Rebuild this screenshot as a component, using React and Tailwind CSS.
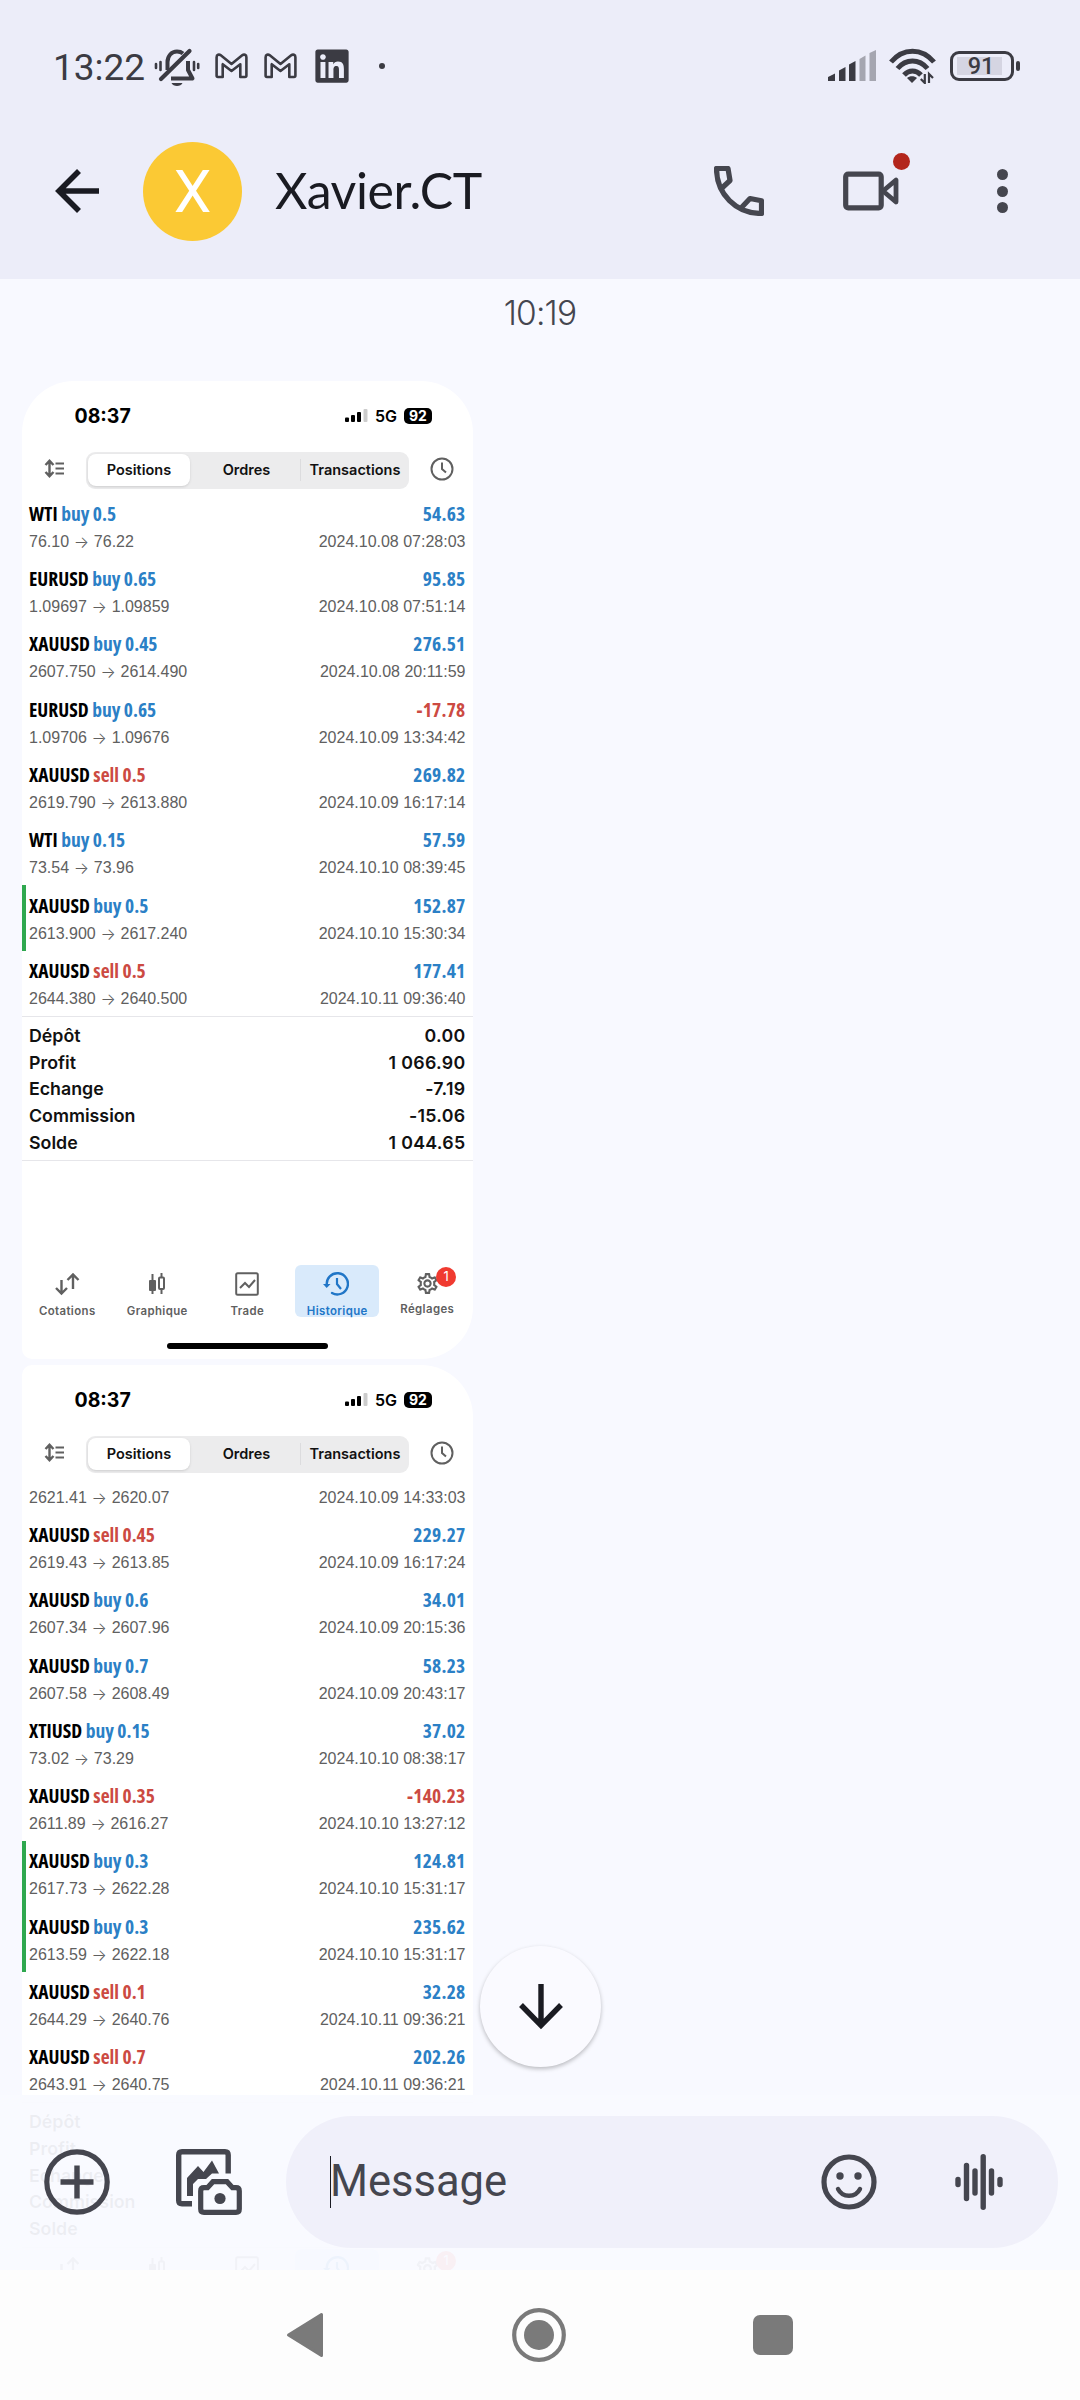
import React from "react";
import { FaLinkedin } from "react-icons/fa6";
import { MdOutlineSettings } from "react-icons/md";

const firstTrades = [
  { symbol: "WTI", op: "buy 0.5", from: "76.10", to: "76.22", profit: "54.63", time: "2024.10.08 07:28:03" },
  { symbol: "EURUSD", op: "buy 0.65", from: "1.09697", to: "1.09859", profit: "95.85", time: "2024.10.08 07:51:14" },
  { symbol: "XAUUSD", op: "buy 0.45", from: "2607.750", to: "2614.490", profit: "276.51", time: "2024.10.08 20:11:59" },
  { symbol: "EURUSD", op: "buy 0.65", from: "1.09706", to: "1.09676", profit: "-17.78", time: "2024.10.09 13:34:42" },
  { symbol: "XAUUSD", op: "sell 0.5", from: "2619.790", to: "2613.880", profit: "269.82", time: "2024.10.09 16:17:14" },
  { symbol: "WTI", op: "buy 0.15", from: "73.54", to: "73.96", profit: "57.59", time: "2024.10.10 08:39:45" },
  { symbol: "XAUUSD", op: "buy 0.5", from: "2613.900", to: "2617.240", profit: "152.87", time: "2024.10.10 15:30:34", tp: true },
  { symbol: "XAUUSD", op: "sell 0.5", from: "2644.380", to: "2640.500", profit: "177.41", time: "2024.10.11 09:36:40" },
];

const secondTrades = [
  { from: "2621.41", to: "2620.07", time: "2024.10.09 14:33:03" },
  { symbol: "XAUUSD", op: "sell 0.45", from: "2619.43", to: "2613.85", profit: "229.27", time: "2024.10.09 16:17:24" },
  { symbol: "XAUUSD", op: "buy 0.6", from: "2607.34", to: "2607.96", profit: "34.01", time: "2024.10.09 20:15:36" },
  { symbol: "XAUUSD", op: "buy 0.7", from: "2607.58", to: "2608.49", profit: "58.23", time: "2024.10.09 20:43:17" },
  { symbol: "XTIUSD", op: "buy 0.15", from: "73.02", to: "73.29", profit: "37.02", time: "2024.10.10 08:38:17" },
  { symbol: "XAUUSD", op: "sell 0.35", from: "2611.89", to: "2616.27", profit: "-140.23", time: "2024.10.10 13:27:12" },
  { symbol: "XAUUSD", op: "buy 0.3", from: "2617.73", to: "2622.28", profit: "124.81", time: "2024.10.10 15:31:17", tp: true },
  { symbol: "XAUUSD", op: "buy 0.3", from: "2613.59", to: "2622.18", profit: "235.62", time: "2024.10.10 15:31:17", tp: true },
  { symbol: "XAUUSD", op: "sell 0.1", from: "2644.29", to: "2640.76", profit: "32.28", time: "2024.10.11 09:36:21" },
  { symbol: "XAUUSD", op: "sell 0.7", from: "2643.91", to: "2640.75", profit: "202.26", time: "2024.10.11 09:36:21" },
];

const firstTotals = [
  ["Dépôt", "0.00"],
  ["Profit", "1 066.90"],
  ["Echange", "-7.19"],
  ["Commission", "-15.06"],
  ["Solde", "1 044.65"],
];

const secondTotals = [["Dépôt"], ["Profit"], ["Echange"], ["Commission"], ["Solde"]];

const Icon = ({ w, h, className = "", children }) => (
  <svg
    width={w}
    height={h}
    viewBox={`0 0 ${w} ${h}`}
    fill="none"
    stroke="currentColor"
    className={`shrink-0 ${className}`}
  >
    {children}
  </svg>
);

const GmailIcon = () => (
  <Icon w={33} h={26}>
    <path
      d="M1.6 22.5V4.2C1.6 1.6 4 .9 5.8 2.3L16.5 11 27.2 2.3C29 .9 31.4 1.6 31.4 4.2V22.5Q31.4 24 30 24H25.3V11.2L16.5 18 7.7 11.2V24H3Q1.6 24 1.6 22.5Z"
      strokeWidth="2.6"
      strokeLinejoin="round"
    />
  </Icon>
);

const StatusBar = () => (
  <div className="flex h-[132px] items-center pl-[53px] pr-[60px] font-['Roboto'] text-[#3b3b43]">
    <span className="w-[97px] pt-[4px] text-[37px] leading-[40px]">13:22</span>
    <Icon w={50} h={50}>
      <g strokeWidth="2.6" strokeLinecap="round">
        <path d="M6 23v4M10.500 21v8M44 21v8M48.200 23v4" />
      </g>
      <path d="M17.500 29V21c0-6 4-10.500 9.500-10.500 2.500 0 4.500.7 6 2M38 20v9l4.500 8.500H21" strokeWidth="4" strokeLinejoin="round" />
      <path d="M11 38 39.500 10" strokeWidth="4.200" strokeLinecap="round" />
      <path d="M21.500 42h11c-1.500 4-9.500 4-11 0Z" fill="currentColor" stroke="none" />
    </Icon>
    <div className="ml-[15px] flex items-center gap-[16px]">
      <GmailIcon />
      <GmailIcon />
      <FaLinkedin size={38} />
    </div>
    <span className="ml-[28px] h-[6px] w-[6px] rounded-full bg-[#3b3b43]" />
    <div className="ml-auto flex items-center">
      <Icon w={49} h={32}>
        <g fill="currentColor" stroke="none">
          <path d="M0 31v-4l7-3.500V31ZM11 31V20.500l6.500-3.500V31ZM21 31V14.500l6.500-3.500V31Z" />
          <path d="M31.500 31V9L37.500 5.500V31ZM41.500 31V3L48 0V31Z" opacity=".4" />
        </g>
      </Icon>
      <Icon w={48} h={36} className="ml-[12px]">
        <g strokeWidth="5">
          <path d="M2 14c12-14.500 31-14.500 43 0M8.500 20.500c8.500-10 21.500-10 30 0M15 27c5-5.500 12-5.500 17 0" />
        </g>
        <path d="M23 35l-5-5c2.500-2.500 7.500-2.500 10 0Z" fill="currentColor" stroke="none" />
        <path d="M35.800 26v9l-4-4M40 35v-9l4 4" strokeWidth="2.200" />
      </Icon>
      <div className="ml-[13px] flex h-[30px] w-[64px] items-center rounded-[9px] border-[3px] border-[#3b3b43] p-[4px]">
        <div className="flex h-[18px] w-[45px] items-center justify-center bg-[#d5d5e2] pl-[3px] pt-[2px] text-[23.5px] font-medium leading-none">
          91
        </div>
      </div>
      <span className="ml-[2px] h-[10px] w-[4px] rounded-sm bg-[#3b3b43]" />
    </div>
  </div>
);

const ChatHeader = () => (
  <div className="flex h-[118px] items-center pl-[55px] text-[#45464f]">
    <Icon w={44} h={44} className="text-[#1a1b22]">
      <path d="M24 2 4 22l20 20M4 22h40" strokeWidth="5.600" />
    </Icon>
    <div className="ml-[44px] flex h-[99px] w-[99px] items-center justify-center rounded-full bg-[#fbc934] font-['Roboto'] text-[60px] leading-none text-white">
      <span className="pt-[2px]">X</span>
    </div>
    <span className="ml-[33px] mt-[-3px] font-['Lato'] text-[50px] leading-[60px] tracking-[-0.4px] text-[#1a1b22]">
      Xavier.CT
    </span>
    <div className="ml-auto flex items-center pr-[72px]">
      <Icon w={50} h={50}>
        <path
          d="M8.500 21.500 16 14.500 14 2.500H2.500C2.500 28 22 47.500 47.500 47.500V34.800L36 32.500 28 41"
          strokeWidth="5.200"
          strokeLinejoin="round"
        />
      </Icon>
      <div className="relative ml-[79px]">
        <Icon w={56} h={40}>
          <rect x="2.700" y="3.200" width="35.500" height="33.600" rx="2.500" strokeWidth="5.200" />
          <path d="M40 20 53 9v22Z" strokeWidth="4.800" strokeLinejoin="round" />
        </Icon>
        <span className="absolute -right-[11px] -top-[18px] h-[17px] w-[17px] rounded-full bg-[#b3251c]" />
      </div>
      <div className="ml-[98px] flex flex-col gap-[5.5px]">
        <span className="h-[11px] w-[11px] rounded-full bg-[#45464f]" />
        <span className="h-[11px] w-[11px] rounded-full bg-[#45464f]" />
        <span className="h-[11px] w-[11px] rounded-full bg-[#45464f]" />
      </div>
    </div>
  </div>
);

const TradeRow = ({ trade }) => {
  const opColor = trade.op?.startsWith("sell") ? "text-[#cc4a42]" : "text-[#2b80c6]";
  const profitColor = trade.profit?.startsWith("-") ? "text-[#cc4a42]" : "text-[#2b80c6]";

  return (
    <div
      className={`flex shrink-0 flex-col justify-end border-l-4 pb-[5px] pl-[3.5px] pr-[7.5px] ${
        trade.symbol ? "h-[65.3px]" : "h-[37.2px]"
      } ${trade.tp ? "border-[#2fa84f]" : "border-transparent"}`}
    >
      {trade.symbol && (
        <div className="flex justify-between font-['Open_Sans'] text-[19.5px] font-bold leading-8 font-stretch-condensed">
          <span className="text-black">
            {trade.symbol} <span className={opColor}>{trade.op}</span>
          </span>
          <span className={`tracking-[0.25px] ${profitColor}`}>{trade.profit}</span>
        </div>
      )}
      <div className="flex justify-between font-['Liberation_Sans'] text-[16px] leading-6 text-[#606060]">
        <span className="flex">
          {trade.from}
          <span className="mx-[4.400px] w-[16px] text-center font-['Inter'] font-light">→</span>
          {trade.to}
        </span>
        <span>{trade.time}</span>
      </div>
    </div>
  );
};

const tabs = [
  {
    label: "Cotations",
    icon: (
      <Icon w={26} h={24}>
        <path d="M7.500 8v13M2 16l5.500 5.500L13 16M19 17V3M13.500 8 19 2.500 24.500 8" strokeWidth="2.400" />
      </Icon>
    ),
  },
  {
    label: "Graphique",
    icon: (
      <Icon w={20} h={24}>
        <path d="M5.500 2v20M14.500 1v4M14.500 17v5" strokeWidth="2" />
        <rect x="2" y="8" width="7" height="11" rx="1" fill="currentColor" stroke="none" />
        <rect x="12" y="5.500" width="5" height="11.500" rx="1" strokeWidth="2" />
      </Icon>
    ),
  },
  {
    label: "Trade",
    icon: (
      <Icon w={24} h={24}>
        <rect x="1.200" y="1.200" width="21.600" height="21.600" rx="1.500" strokeWidth="2" />
        <path d="M5 16l5-5 4 4 6-7" strokeWidth="2" />
      </Icon>
    ),
  },
  {
    label: "Historique",
    active: true,
    icon: (
      <Icon w={26} h={24} className="-ml-[2px]">
        <path d="M3.800 13A10.600 10.600 0 1 1 9 21" strokeWidth="2.400" strokeLinecap="round" />
        <path d="M0 12h7.500l-3.800 4Z" fill="currentColor" stroke="none" />
        <path d="M14 6v6l4 5" strokeWidth="2.200" />
      </Icon>
    ),
  },
  { label: "Réglages", badge: "1", icon: <MdOutlineSettings size={27} className="-my-[1.5px]" /> },
];

const TradingShot = ({ trades, totals, rounded, showLabels = true }) => (
  <div className={`flex h-[978px] w-[451.5px] flex-col overflow-hidden bg-white font-['Inter'] ${rounded}`}>
    <div className="flex h-[70.5px] shrink-0 items-center pl-[53px] pr-[41px] text-black">
      <span className="text-[19.5px] font-bold">08:37</span>
      <div className="ml-auto flex items-center">
        <Icon w={23} h={14}>
          <g fill="currentColor" stroke="none">
            <rect x="0" y="8.500" width="4" height="4.500" rx="1" />
            <rect x="6" y="6" width="4" height="7" rx="1" />
            <rect x="12" y="3" width="4" height="10" rx="1" />
            <rect x="18.500" y="0" width="4" height="13" rx="1" opacity=".2" />
          </g>
        </Icon>
        <span className="ml-[7px] text-[16px] font-semibold leading-none">5G</span>
        <span className="ml-[7px] flex h-[16px] w-[28px] items-center justify-center rounded-[5px] bg-black text-[14px] font-bold leading-none text-white">
          92
        </span>
      </div>
    </div>

    <div className="flex h-[37px] shrink-0 items-center pl-[22px] pr-[19px] text-[#606060]">
      <Icon w={21} h={20} className="-mt-[3px]">
        <path d="M5.500 2.500v14M1.500 6l4-4.200 4 4.200M1.500 13l4 4.200 4-4.200" strokeWidth="2.400" />
        <path d="M11.500 4.500H20M11.500 9.500H20M11.500 14.500H20" strokeWidth="2.200" />
      </Icon>
      <div className="ml-[21.5px] flex h-[37px] w-[323px] items-center rounded-[9px] bg-[#ececed] p-[2px] text-[14.5px] font-semibold text-[#111]">
        <div className="flex h-[32px] w-[102px] items-center justify-center rounded-[8px] bg-white shadow">Positions</div>
        <div className="flex h-[22px] w-[111px] items-center justify-center border-r border-[#dcdcde] pl-[3px]">Ordres</div>
        <div className="flex flex-1 items-center justify-center pl-[2px]">Transactions</div>
      </div>
      <Icon w={24} h={24} className="-mt-[3px] ml-auto">
        <circle cx="12" cy="12" r="10.500" strokeWidth="2" />
        <path d="M12 5.500V12l4 3.500" strokeWidth="2" />
      </Icon>
    </div>

    <div className="mt-[5px] flex shrink-0 flex-col">
      {trades.map((trade, i) => (
        <TradeRow key={i} trade={trade} />
      ))}
    </div>

    <div className="shrink-0 border-y border-[#e6e6ea] pb-[4px] pl-[7.5px] pr-[7.5px] pt-[6px] text-[17.8px] font-semibold text-[#111]">
      {totals.map(([label, value]) => (
        <div key={label} className="flex h-[26.7px] items-center justify-between">
          <span>{label}</span>
          <span className="tracking-[0.3px]">{value}</span>
        </div>
      ))}
    </div>

    <div className="mt-auto flex shrink-0 justify-center">
      {tabs.map((tab) => (
        <div
          key={tab.label}
          className={`relative mx-[3px] flex h-[52px] w-[84px] flex-col items-center rounded-[6px] pt-[7px] ${
            tab.active ? "bg-[#d9eafb] text-[#2176c7]" : "text-[#606060]"
          }`}
        >
          {tab.icon}
          {showLabels && (
            <span className="mt-[7px] text-[11.4px] font-semibold leading-[16px] tracking-[0.4px]">{tab.label}</span>
          )}
          {tab.badge && (
            <span className="absolute right-[13px] top-[2px] flex h-[20px] w-[20px] items-center justify-center rounded-full bg-[#f03a30] text-[13px] text-white">
              {tab.badge}
            </span>
          )}
        </div>
      ))}
    </div>
    <div className="mb-[10px] mt-[26px] h-[6px] w-[161px] shrink-0 self-center rounded-full bg-black" />
  </div>
);

const ComposeBar = () => (
  <div className="absolute inset-x-0 bottom-0 flex h-[175.500px] items-center bg-[#f9faff]/95 pl-[44px] text-[#45464f]">
    <Icon w={66} h={66}>
      <circle cx="33" cy="33" r="30.200" strokeWidth="5.200" />
      <path d="M33 16.500v33M16.500 33h33" strokeWidth="5.400" />
    </Icon>
    <Icon w={66} h={66} className="ml-[66px]">
      <path d="M16 54.700H6Q2.700 54.700 2.700 51.500V6Q2.700 2.700 6 2.700H49Q52.200 2.700 52.200 6V24.500" strokeWidth="5.400" />
      <path d="M11 47V29L22 17l5.500 6L36 11.500 43 24.500H36L30 30H22L17 35V47Z" fill="currentColor" stroke="none" />
      <path
        d="M28 38.700H31.500L37 32.700H51L56.500 38.700H60Q63.300 38.700 63.300 42V60Q63.300 63.300 60 63.300H28Q24.700 63.300 24.700 60V42Q24.700 38.700 28 38.700Z"
        strokeWidth="5.200"
      />
      <circle cx="44" cy="49.500" r="5.600" fill="currentColor" stroke="none" />
    </Icon>
    <div className="ml-[44px] flex h-[132px] w-[772px] items-center rounded-full bg-[#f0f0fa] pl-[44px] pr-[55px]">
      <span className="h-[52px] w-px bg-[#1a1b22]" />
      <span className="-ml-px font-['Roboto'] text-[43.5px] leading-[52px]">Message</span>
      <Icon w={56} h={56} className="ml-auto">
        <circle cx="28" cy="28" r="25" strokeWidth="5.200" />
        <circle cx="19" cy="22" r="3.700" fill="currentColor" stroke="none" />
        <circle cx="37" cy="22" r="3.700" fill="currentColor" stroke="none" />
        <path d="M17 35c4.500 9 17.500 9 22 0" strokeWidth="4.400" strokeLinecap="round" />
      </Icon>
      <Icon w={48} h={56} className="ml-[78px]">
        <path
          d="M3 25.500v5M11.500 11.500v33M20 17v22M28.200 2.800v50.400M36.500 17v22M45 25.500v5"
          strokeWidth="5.400"
          strokeLinecap="round"
        />
      </Icon>
    </div>
  </div>
);

const NavBar = () => (
  <div className="flex h-[130px] shrink-0 items-center bg-[#fdfdfd] pl-[286px] text-[#7a7a7a]">
    <Icon w={38} h={46}>
      <path d="M35.500 2.500v41L2.500 23Z" fill="currentColor" strokeWidth="3" strokeLinejoin="round" />
    </Icon>
    <Icon w={54} h={54} className="ml-[188px]">
      <circle cx="27" cy="27" r="24.800" strokeWidth="4.200" />
      <circle cx="27" cy="27" r="15" fill="currentColor" stroke="none" />
    </Icon>
    <span className="ml-[187px] h-[40px] w-[40px] rounded-[7px] bg-[#7a7a7a]" />
  </div>
);

const App = () => {
  return (
    <div className="flex h-[2400px] w-[1080px] flex-col overflow-hidden bg-[#f8f9ff]">
      <header className="h-[278.500px] shrink-0 bg-[#ecedf9]">
        <StatusBar />
        <ChatHeader />
      </header>

      <main className="relative flex-1 overflow-hidden">
        <p className="h-[102.500px] pt-[14px] text-center font-['Inter'] text-[33.5px] font-light leading-[40px] tracking-[-0.8px] text-[#45464f]">
          10:19
        </p>
        <div className="flex flex-col gap-[6px] pl-[21.500px]">
          <TradingShot
            trades={firstTrades}
            totals={firstTotals}
            rounded="rounded-t-[52px] rounded-br-[52px] rounded-bl-[10px]"
          />
          <TradingShot
            trades={secondTrades}
            totals={secondTotals}
            showLabels={false}
            rounded="rounded-tl-[10px] rounded-tr-[52px] rounded-b-[52px]"
          />
        </div>

        <ComposeBar />

        <button className="absolute bottom-[203px] left-[480px] flex h-[121px] w-[121px] items-center justify-center rounded-full bg-[#fafaff] text-[#1a1b22] shadow-[0_2px_4px_rgba(0,0,0,0.25)]">
          <Icon w={46} h={46}>
            <path d="M23 0v41M3 21l20 20.500L43 21" strokeWidth="5.400" />
          </Icon>
        </button>
      </main>

      <NavBar />
    </div>
  );
};

export default App;
